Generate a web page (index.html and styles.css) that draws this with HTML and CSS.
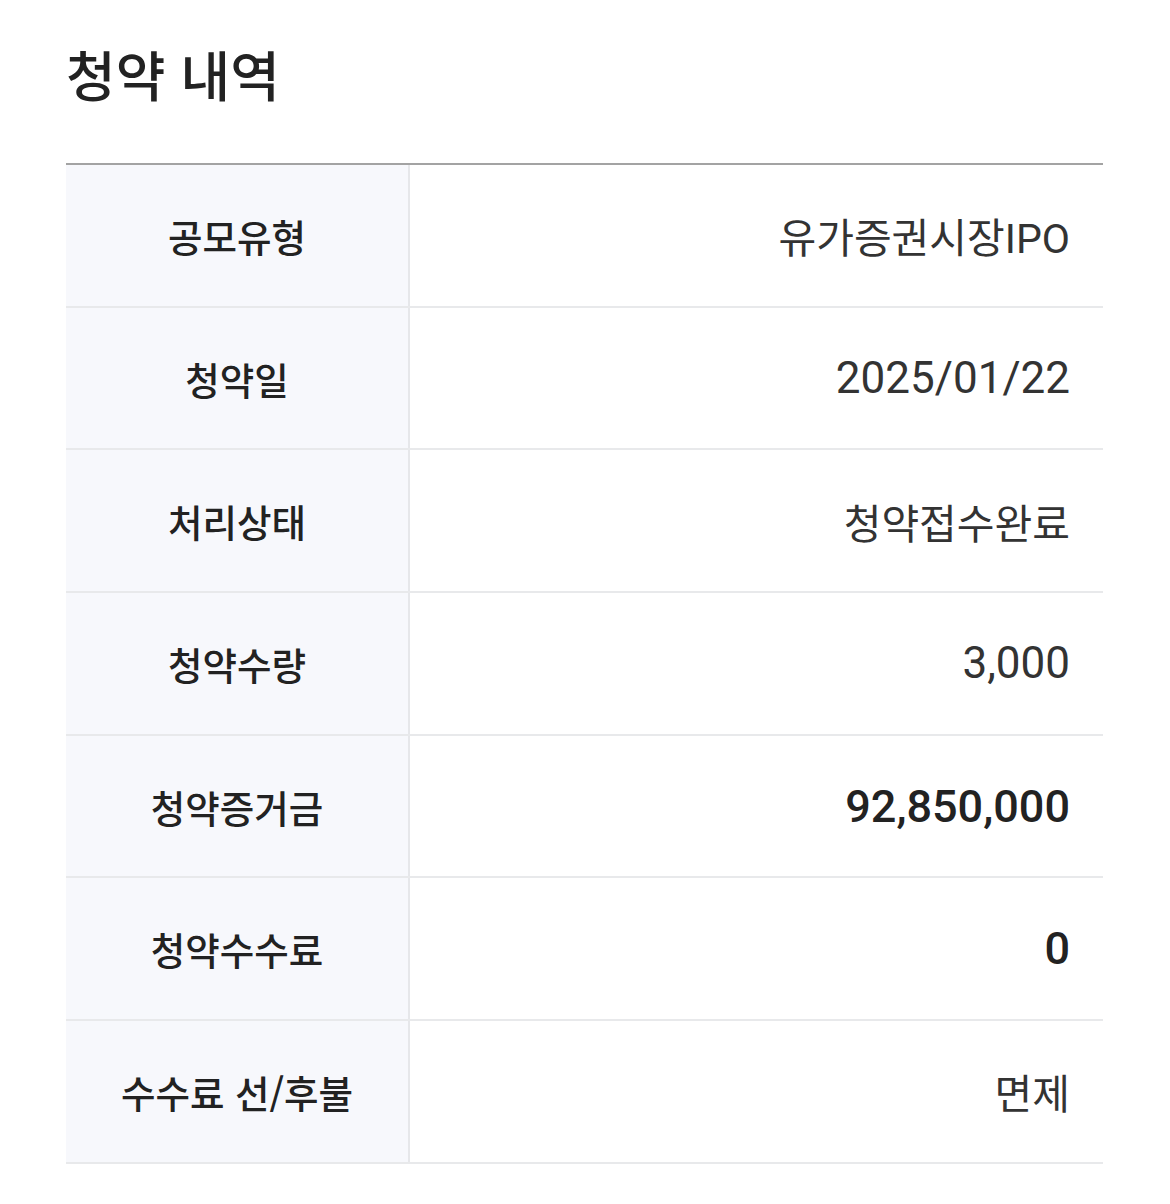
FILE: index.html
```html
<!DOCTYPE html>
<html lang="ko">
<head>
<meta charset="utf-8">
<link rel="stylesheet" href="styles.css">
</head>
<body>
<div class="page">
  <h1 class="title">청약 내역</h1>
  <div class="table">
    <div class="row"><div class="label">공모유형</div><div class="value">유가증권시장IPO</div></div>
    <div class="row"><div class="label">청약일</div><div class="value num">2025/01/22</div></div>
    <div class="row"><div class="label">처리상태</div><div class="value">청약접수완료</div></div>
    <div class="row"><div class="label">청약수량</div><div class="value num">3,000</div></div>
    <div class="row"><div class="label">청약증거금</div><div class="value num strong">92,850,000</div></div>
    <div class="row"><div class="label">청약수수료</div><div class="value num strong">0</div></div>
    <div class="row"><div class="label">수수료 선/후불</div><div class="value">면제</div></div>
  </div>
</div>
</body>
</html>
```
FILE: styles.css
```css
html, body {
  margin: 0;
  padding: 0;
  background: #ffffff;
}
body {
  font-family: "Noto Sans CJK KR", "Noto Sans", sans-serif;
  color: #222222;
}
.page {
  padding: 0 67px 0 66px;
}
.title {
  margin: 0;
  padding-top: 38px;
  height: 163px;
  box-sizing: border-box;
  font-size: 54px;
  font-weight: 500;
  line-height: 72px;
  color: #222222;
}
.table {
  border-top: 2px solid #a3a3a3;
}
.row {
  display: grid;
  grid-template-columns: 344px 1fr;
  height: 140.7px;
  border-bottom: 2px solid #e8e9eb;
}
.label {
  background: #f7f8fc;
  border-right: 2px solid #e6e7ea;
  display: flex;
  align-items: center;
  justify-content: center;
  font-size: 37.5px;
  font-weight: 500;
  color: #222222;
}
.value {
  display: flex;
  align-items: center;
  justify-content: flex-end;
  padding-right: 33px;
  font-family: "Roboto", "Noto Sans CJK KR", sans-serif;
  font-size: 41px;
  font-weight: 400;
  color: #333333;
}
.value.num {
  font-size: 44px;
}
.value.strong {
  font-size: 45px;
  font-weight: 500;
  color: #222222;
}
```
